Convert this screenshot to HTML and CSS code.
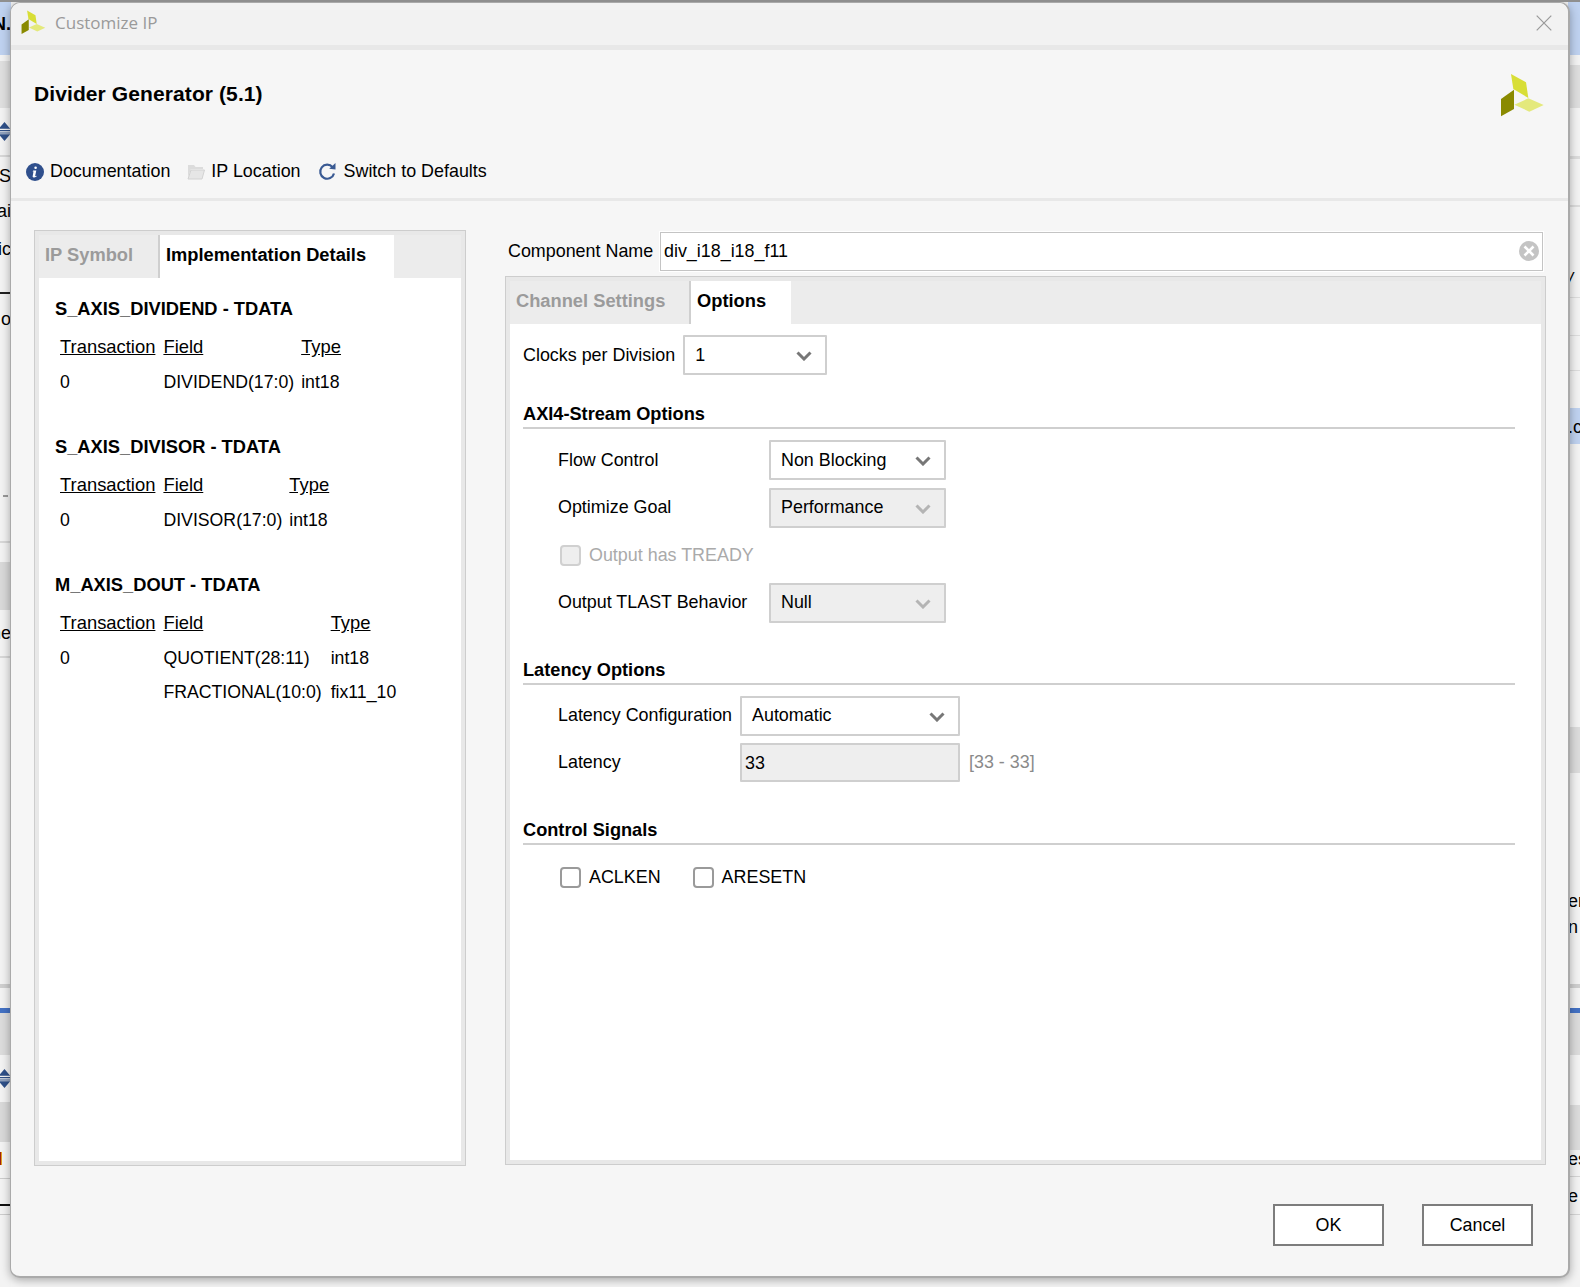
FILE: index.html
```html
<!DOCTYPE html>
<html lang="en">
<head>
<meta charset="utf-8">
<title>Customize IP</title>
<link rel="stylesheet" href="styles.css">
</head>
<body>
<svg class="defs" width="0" height="0" aria-hidden="true">
  <symbol id="logo" viewBox="600 217 135 135">
    <polygon points="633,220 678,245 685,292 640,265" fill="#d8de36"/>
    <polygon points="642,267 642,325 603,347 603,295" fill="#8a8a00"/>
    <polygon points="685,293 731,313 688,333 643,312" fill="#e4e97c"/>
  </symbol>
  <symbol id="chev" viewBox="0 0 16 10">
    <path d="M1.5 1.5 8 8l6.5-6.5" fill="none" stroke="currentColor" stroke-width="3"/>
  </symbol>
  <symbol id="updown" viewBox="0 0 12 20">
    <path d="M6 0 12 7H0z M0 8.5h12v1.2H0z M0 11h12v1.2H0z M0 13h12L6 20z" fill="#2f5088"/>
  </symbol>
</svg>

<div class="desktop">
  <div class="strip strip-left">
    <div class="bd blue-top"></div>
    <span class="bt lt0">N.</span>
    <div class="bd lband1"></div>
    <svg class="ud ud1"><use href="#updown"/></svg>
    <div class="bd lsep1"></div>
    <span class="bt lt1">S</span>
    <span class="bt lt2">ai</span>
    <span class="bt lt3">ic</span>
    <div class="bd lblack1"></div>
    <span class="bt lt4">o</span>
    <div class="bd ldash"></div>
    <div class="bd lsep2"></div>
    <div class="bd lband2"></div>
    <span class="bt lt5">ne</span>
    <div class="bd lsep3"></div>
    <div class="bd lsep4"></div>
    <div class="bd bluebar"></div>
    <div class="bd lband3"></div>
    <svg class="ud ud2"><use href="#updown"/></svg>
    <div class="bd lband4"></div>
    <div class="bd lmark"></div>
    <div class="bd lsep5"></div>
    <div class="bd lblack2"></div>
    <div class="bd lsep6"></div>
  </div>

  <div class="strip strip-right">
    <div class="bd blue-top"></div>
    <div class="bd rband1"></div>
    <div class="bd rsep1"></div>
    <div class="bd rsep2"></div>
    <span class="bt rt1">/</span>
    <div class="bd rsep3"></div>
    <div class="bd rsep4"></div>
    <div class="bd rsep5"></div>
    <div class="bd rblue"></div>
    <span class="bt rt2">.c</span>
    <div class="bd rband2"></div>
    <span class="bt rt3">er</span>
    <span class="bt rt4">n</span>
    <div class="bd lsep4"></div>
    <div class="bd bluebar"></div>
    <div class="bd lband3"></div>
    <div class="bd rband3"></div>
    <span class="bt rt5">es</span>
    <div class="bd rsep6"></div>
    <span class="bt rt6">e</span>
    <div class="bd rsep7"></div>
  </div>

  <div class="dialog">
    <div class="titlebar">
      <svg class="title-logo"><use href="#logo"/></svg>
      <span class="title-text">Customize IP</span>
      <svg class="close" viewBox="0 0 16 16"><path d="M.7.7l14.6 14.6M15.3.7.7 15.3" stroke="#999" stroke-width="1.2" fill="none"/></svg>
    </div>

    <div class="header">
      <h1 class="heading">Divider Generator (5.1)</h1>
      <svg class="head-logo"><use href="#logo"/></svg>
    </div>

    <div class="toolbar">
      <span class="tool tool-doc">
        <svg class="tool-icon" viewBox="0 0 18 18"><circle cx="9" cy="9" r="9" fill="#2f4f8c"/><path d="M9.6 3.4a1.3 1.3 0 1 1 0 2.6 1.3 1.3 0 0 1 0-2.6zM7.2 7.5h3.1L9.2 12.8c-.1.5.4.5 1.3 0l.1.6c-1.300.9-2 1-3 1-.8 0-1.100-.6-.9-1.400l.8-4.500-.9-.1z" fill="#fff"/></svg>
        Documentation
      </span>
      <span class="tool tool-loc">
        <svg class="tool-icon folder" viewBox="0 0 18 16"><path d="M1 1h6l1.500 2H16v2H4L1 13z" fill="#dcdcdc"/><path d="M4 6h13.500L15 15H1z" fill="#e6e6e6" stroke="#d2d2d2"/></svg>
        IP Location
      </span>
      <span class="tool tool-def">
        <svg class="tool-icon refresh" viewBox="0 0 18 18"><path d="M14.600 4.200A7 7 0 1 0 16 10.500" fill="none" stroke="#3a5a93" stroke-width="2.200"/><path d="M11.200 5.800 17.500 6.500 17.500 0z" fill="#3a5a93"/></svg>
        Switch to Defaults
      </span>
    </div>

    <div class="main">
      <section class="panel panel-left">
        <div class="tabs">
          <div class="tab tab-symbol">IP Symbol</div>
          <div class="tab tab-active tab-impl">Implementation Details</div>
        </div>
        <div class="panel-body details">
          <h2 class="port">S_AXIS_DIVIDEND - TDATA</h2>
          <table class="ports">
            <tr><th><span>Transaction</span></th><th><span>Field</span></th><th><span>Type</span></th></tr>
            <tr><td>0</td><td>DIVIDEND(17:0)</td><td>int18</td></tr>
          </table>
          <h2 class="port port-next">S_AXIS_DIVISOR - TDATA</h2>
          <table class="ports">
            <tr><th><span>Transaction</span></th><th><span>Field</span></th><th><span>Type</span></th></tr>
            <tr><td>0</td><td>DIVISOR(17:0)</td><td>int18</td></tr>
          </table>
          <h2 class="port port-next">M_AXIS_DOUT - TDATA</h2>
          <table class="ports ports-wide">
            <tr><th><span>Transaction</span></th><th><span>Field</span></th><th><span>Type</span></th></tr>
            <tr><td>0</td><td>QUOTIENT(28:11)</td><td>int18</td></tr>
            <tr><td></td><td>FRACTIONAL(10:0)</td><td>fix11_10</td></tr>
          </table>
        </div>
      </section>

      <div class="right-col">
        <div class="name-row">
          <span class="name-label">Component Name</span>
          <div class="name-input">
            <span>div_i18_i18_f11</span>
            <svg class="clear" viewBox="0 0 20 20"><circle cx="10" cy="10" r="10" fill="#c4c4c4"/><path d="M5.500 5.500l9 9M14.500 5.500l-9 9" stroke="#fff" stroke-width="2.600"/></svg>
          </div>
        </div>

        <section class="panel panel-right">
          <div class="tabs">
            <div class="tab tab-channel">Channel Settings</div>
            <div class="tab tab-active tab-options">Options</div>
          </div>
          <div class="panel-body options">
            <div class="clocks">
              <span>Clocks per Division</span>
              <div class="select sel-clocks"><span>1</span><svg class="chev"><use href="#chev"/></svg></div>
            </div>

            <h3 class="group">AXI4-Stream Options</h3>
            <div class="rows rows-axi">
              <span>Flow Control</span>
              <div class="select sel-axi"><span>Non Blocking</span><svg class="chev"><use href="#chev"/></svg></div>
              <span>Optimize Goal</span>
              <div class="select sel-axi disabled"><span>Performance</span><svg class="chev"><use href="#chev"/></svg></div>
              <div class="check-row disabled-check"><span class="box"></span><span>Output has TREADY</span></div>
              <span>Output TLAST Behavior</span>
              <div class="select sel-axi disabled"><span>Null</span><svg class="chev"><use href="#chev"/></svg></div>
            </div>

            <h3 class="group group-latency">Latency Options</h3>
            <div class="rows rows-lat">
              <span>Latency Configuration</span>
              <div class="select sel-lat"><span>Automatic</span><svg class="chev"><use href="#chev"/></svg></div>
              <span></span>
              <span>Latency</span>
              <div class="readonly">33</div>
              <span class="range">[33 - 33]</span>
            </div>

            <h3 class="group group-control">Control Signals</h3>
            <div class="signals">
              <div class="check-row"><span class="box"></span><span>ACLKEN</span></div>
              <div class="check-row"><span class="box"></span><span>ARESETN</span></div>
            </div>
          </div>
        </section>
      </div>
    </div>

    <div class="footer">
      <button class="btn" type="button">OK</button>
      <button class="btn" type="button">Cancel</button>
    </div>
  </div>
</div>
</body>
</html>
```
FILE: styles.css
```css
* { box-sizing: border-box; }
html, body { margin: 0; padding: 0; }
body {
  width: 1580px;
  height: 1287px;
  overflow: hidden;
  font-family: "Liberation Sans", Arial, sans-serif;
  font-size: 17.9px;
  color: #000;
  background: #f4f4f4;
}
.defs { position: absolute; }
.desktop { position: relative; width: 1580px; height: 1287px; overflow: hidden; border-top: 2px solid #8f8f8f; }

/* window behind the dialog */
.strip { position: absolute; top: -2px; height: 1287px; overflow: hidden; background: #f3f3f3; }
.strip-left { left: 0; width: 11px; }
.strip-right { right: 0; width: 12px; }
.bd { position: absolute; left: 0; right: 0; }
.bt { position: absolute; white-space: nowrap; font-size: 18px; line-height: 20px; }
.strip-left .bt { right: 0; }
.strip-right .bt { left: 0; }
.ud { position: absolute; left: -2px; width: 13px; height: 19px; }
.ud1 { top: 122px; }
.ud2 { top: 1069px; }
.blue-top { top: 2px; height: 53px; background: #bfd2f0; }
.lt0 { top: 14px; font-weight: 700; }
.lband1 { top: 61px; height: 47px; background: #dfdfdf; }
.lsep1 { top: 155px; height: 2px; background: #d8d8d8; }
.lt1 { top: 166px; }
.lt2 { top: 201px; }
.lt3 { top: 239px; }
.lblack1 { top: 292px; height: 2px; background: #222; }
.lt4 { top: 309px; }
.ldash { top: 495px; left: 3px; right: 3px; height: 2px; background: #999; }
.lsep2 { top: 541px; height: 2px; background: #d8d8d8; }
.lband2 { top: 562px; height: 48px; background: #d9d9d9; }
.lt5 { top: 623px; }
.lsep3 { top: 656px; height: 2px; background: #d8d8d8; }
.lsep4 { top: 984px; height: 4px; background: #cfcfcf; }
.bluebar { top: 1008px; height: 5px; background: #4472c4; }
.lband3 { top: 1013px; height: 42px; background: #dcdcdc; }
.lband4 { top: 1102px; height: 40px; background: #d9d9d9; }
.lmark { top: 1152px; left: 0; right: 9px; height: 13px; background: #a02010; border-right: 1px solid #e0a020; }
.lsep5 { top: 1178px; height: 1px; background: #ccc; }
.lblack2 { top: 1204px; height: 2px; background: #111; }
.lsep6 { top: 1214px; height: 1px; background: #ccc; }
.rband1 { top: 65px; height: 43px; background: #dedede; }
.rsep1 { top: 156px; height: 3px; background: #dcdcdc; }
.rsep2 { top: 205px; height: 2px; background: #dcdcdc; }
.rt1 { top: 269px; font-style: italic; }
.rsep3 { top: 297px; height: 1px; background: #ddd; }
.rsep4 { top: 335px; height: 1px; background: #ddd; }
.rsep5 { top: 370px; height: 1px; background: #ddd; }
.rblue { top: 408px; height: 36px; background: #bfd2f0; }
.rt2 { top: 417px; }
.rband2 { top: 727px; height: 46px; background: #dcdcdc; }
.rt3 { top: 891px; }
.rt4 { top: 917px; }
.rband3 { top: 1105px; height: 45px; background: #dcdcdc; }
.rt5 { top: 1149px; }
.rsep6 { top: 1176px; height: 1px; background: #d4d4d4; }
.rt6 { top: 1186px; }
.rsep7 { top: 1214px; height: 1px; background: #d4d4d4; }

/* dialog */
.dialog {
  position: absolute;
  left: 10px;
  top: 0;
  width: 1560px;
  height: 1276px;
  display: flex;
  flex-direction: column;
  background: #f6f6f6;
  border: 1px solid #aaa;
  border-bottom-width: 2px;
  border-right-width: 2px;
  border-radius: 10px;
  box-shadow: 0 2px 10px rgba(0, 0, 0, .32);
}
.titlebar {
  flex: none;
  height: 47px;
  display: flex;
  align-items: center;
  background: #f2f2f2;
  border-bottom: 5px solid #e8e8e8;
  border-radius: 10px 10px 0 0;
  padding: 0 0 3px 10px;
}
.title-logo { width: 25px; height: 25px; flex: none; margin-top: -1px; }
.title-text { margin-left: 9px; font-family: "Open Sans", sans-serif; font-size: 17px; color: #9a9a9a; }
.close { width: 16px; height: 16px; margin-left: auto; margin-right: 16px; }

.header { flex: none; height: 96px; display: flex; justify-content: space-between; align-items: flex-start; padding: 32px 23px 0 23px; }
.heading { margin: 0; font-size: 21px; line-height: 24px; font-weight: 700; letter-spacing: .1px; }
.head-logo { width: 45px; height: 45px; margin-top: -9px; }

.toolbar {
  flex: none;
  height: 55px;
  display: flex;
  align-items: center;
  padding: 0 0 1px 15px;
  border-bottom: 3px solid #e8e8e8;
}
.tool { display: flex; align-items: center; gap: 7px; }
.tool-doc { gap: 6px; }
.tool-icon { width: 18px; height: 18px; flex: none; }
.tool-loc { margin-left: 17px; gap: 6px; }
.tool-def { margin-left: 17px; gap: 8px; }
.folder { height: 16px; }

.main { flex: 1; display: flex; padding: 29px 0 0 23px; gap: 39px; }
.panel { border: 1px solid #cdcdcd; background: #e8e8e8; padding: 4px; display: flex; flex-direction: column; }
.panel-left { flex: none; width: 432px; height: 936px; }
.right-col { flex: none; width: 1041px; display: flex; flex-direction: column; }
.panel-right { height: 889px; margin-top: 5px; }
.tabs { flex: none; height: 43px; background: #ececec; display: flex; }
.tab { font-weight: 700; font-size: 18.3px; padding-top: 9px; color: #9b9b9b; border-right: 2px solid #cfcfcf; white-space: nowrap; }
.tab-symbol { width: 121px; padding-left: 6px; }
.tab-channel { width: 181px; padding-left: 6px; }
.tab-active { background: #fff; color: #000; border-right: 0; padding-left: 6px; }
.tab-impl { width: 234px; }
.tab-options { width: 100px; }
.panel-body { flex: 1; background: #fff; }

/* details */
.details { padding: 21px 0 0 16px; }
.port { margin: 0; font-size: 18.3px; line-height: 20px; font-weight: 700; }
.port-next { margin-top: 38px; }
.ports { border-collapse: collapse; margin: 11px 0 0 5px; }
.ports th, .ports td { padding: 0 7px 0 0; height: 34.5px; font-weight: 400; text-align: left; white-space: nowrap; line-height: 20px; vertical-align: middle; }
.ports th { font-size: 18.4px; }
.ports td { font-size: 17.7px; }
.ports th span { text-decoration: underline; }
.ports th:first-child, .ports td:first-child { padding-right: 8px; }
.ports-wide th:nth-child(2), .ports-wide td:nth-child(2) { padding-right: 9px; }

/* name row */
.name-row { height: 40px; margin-top: 1px; display: flex; align-items: center; }
.name-label { margin-left: 3px; width: 152px; white-space: nowrap; }
.name-input {
  flex: 1;
  height: 39px;
  margin-right: 3px;
  display: flex;
  align-items: center;
  justify-content: space-between;
  padding: 0 3px;
  background: #fff;
  border: 1px solid #c4c4c4;
  box-shadow: 0 0 0 1px #fff;
}
.clear { width: 20px; height: 20px; }

/* options */
.options { padding: 11px 26px 0 13px; }
.clocks { display: flex; align-items: center; gap: 8px; }
.select {
  height: 40px;
  display: flex;
  align-items: center;
  justify-content: space-between;
  padding: 0 13px 0 10px;
  background: #fff;
  border: 2px solid #cfcfcf;
  border-radius: 1px;
}
.select.disabled { background: #eee; }
.chev { width: 16px; height: 10px; color: #777; margin-top: 2px; flex: none; }
.disabled .chev { color: #b4b4b4; }
.sel-clocks { width: 144px; }
.sel-axi { width: 177px; }
.sel-lat { width: 220px; }
.group {
  margin: 25px 0 0;
  height: 29px;
  line-height: 28px;
  font-size: 18.2px;
  font-weight: 700;
  border-bottom: 2px solid #cfcfcf;
}
.group-latency { margin-top: 33px; }
.group-control { margin-top: 34px; }
.rows { display: grid; margin: 11px 0 0 35px; align-items: center; }
.rows-axi { grid-template-columns: 211px 177px; row-gap: 7.5px; }
.rows-lat { grid-template-columns: 182px 220px auto; row-gap: 7px; justify-content: start; }
.check-row { display: flex; align-items: center; gap: 8px; white-space: nowrap; }
.rows-axi .check-row { grid-column: 1 / 3; height: 40px; margin-left: 2px; }
.box { width: 21px; height: 21px; background: #fff; border: 2px solid #9a9a9a; border-radius: 4px; flex: none; }
.disabled-check { color: #aaa; }
.disabled-check .box { background: #eee; border-color: #d0d0d0; }
.readonly { height: 39px; line-height: 37px; padding-left: 3px; background: #eee; border: 2px solid #cfcfcf; border-radius: 1px; }
.range { margin-left: 9px; color: #8a8a8a; }
.signals { display: flex; gap: 32px; margin: 22px 0 0 37px; }

/* footer */
.footer { flex: none; height: 111px; display: flex; justify-content: flex-end; gap: 38px; padding: 38px 35px 0 0; }
.btn {
  width: 111px;
  height: 42px;
  padding: 0;
  background: #fff;
  color: #000;
  border: 2px solid #7d7d7d;
  font: inherit;
}
```
